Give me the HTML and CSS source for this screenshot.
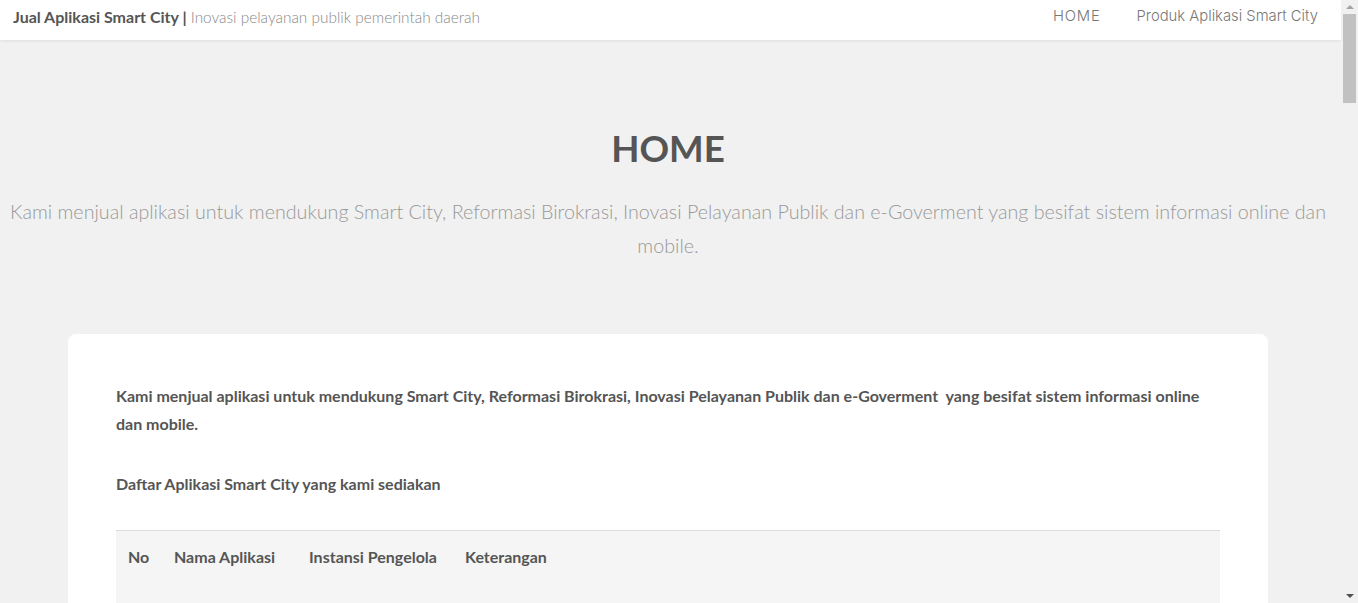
FILE: index.html
```html
<!DOCTYPE html>
<html lang="id">
<head>
<meta charset="utf-8">
<title>Jual Aplikasi Smart City</title>
<link rel="stylesheet" href="styles.css">
</head>
<body>
<div class="page">
  <header class="topbar">
    <div class="brand"><strong>Jual Aplikasi Smart City |</strong> <span>Inovasi pelayanan publik pemerintah daerah</span></div>
    <nav class="nav">
      <a href="#">HOME</a>
      <a href="#">Produk Aplikasi Smart City</a>
    </nav>
  </header>
  <section class="hero">
    <h1>HOME</h1>
    <p>Kami menjual aplikasi untuk mendukung Smart City, Reformasi Birokrasi, Inovasi Pelayanan Publik dan e-Goverment yang besifat sistem informasi online dan mobile.</p>
  </section>
  <main class="card">
    <p class="lead">Kami menjual aplikasi untuk mendukung Smart City, Reformasi Birokrasi, Inovasi Pelayanan Publik dan e-Goverment&nbsp; yang besifat sistem informasi online dan mobile.</p>
    <p class="lead">Daftar Aplikasi Smart City yang kami sediakan</p>
    <table class="apps">
      <thead>
        <tr><th class="c-no">No</th><th class="c-nama">Nama Aplikasi</th><th class="c-inst">Instansi Pengelola</th><th class="c-ket">Keterangan</th><th></th></tr>
      </thead>
      <tbody>
        <tr><td>1</td><td>e-Kinerja</td><td>BKD</td><td>Aplikasi penilaian kinerja pegawai</td><td></td></tr>
        <tr><td>2</td><td>e-Surat</td><td>Sekretariat Daerah</td><td>Aplikasi surat menyurat elektronik</td><td></td></tr>
      </tbody>
    </table>
  </main>
</div>
<div class="scrollbar" aria-hidden="true">
  <span class="arrow up"></span>
  <span class="thumb"></span>
  <span class="arrow down"></span>
</div>
</body>
</html>
```
FILE: styles.css
```css
html, body { margin: 0; padding: 0; }
body {
  background: #f1f1f1;
  font-family: Lato, "Open Sans", sans-serif;
  color: #555;
}
.page { width: 1341px; }
.topbar {
  height: 40px;
  background: #fff;
  box-shadow: 0 1px 3px rgba(0,0,0,0.08);
  display: flex;
  align-items: flex-start;
  justify-content: space-between;
  padding: 0 23px 0 13px;
}
.brand {
  font-size: 16px;
  line-height: 33px;
}
.brand strong { font-weight: 700; color: #555; }
.brand span { font-weight: 300; color: #888; font-size: 15.4px; }
.nav { display: flex; gap: 36px; }
.nav a {
  font-family: Inter, "Open Sans", sans-serif;
  font-weight: 300;
  font-size: 14.8px;
  line-height: 33px;
  color: #777;
  text-decoration: none;
}
.nav a:first-child { letter-spacing: 0.8px; }
.hero {
  text-align: center;
  padding: 84px 12px 0 7px;
  height: 210px;
}
.hero h1 {
  margin: 0;
  font-size: 36.7px;
  font-weight: 700;
  line-height: 48px;
  color: #555;
}
.hero p {
  margin: 23px 0 0;
  font-size: 19.7px;
  font-weight: 300;
  line-height: 34px;
  color: #999;
}
.card {
  width: 1104px;
  margin: 0 0 40px 68px;
  background: #fff;
  border-radius: 8px;
  padding: 48px 48px 40px;
}
.lead {
  margin: 0 0 32px;
  font-size: 16px;
  font-weight: 700;
  line-height: 28px;
  color: #555;
}
.apps {
  width: 100%;
  border-collapse: collapse;
  font-size: 16px;
  color: #555;
}
.apps thead tr {
  background: #f5f5f5;
  border-top: 1px solid #ddd;
}
.apps th {
  text-align: left;
  font-weight: 700;
  padding: 16px 12px 36px;
  line-height: 20px;
}
.apps th.c-no { width: 22px; }
.apps th.c-nama { width: 111px; }
.apps th.c-inst { width: 132px; }
.apps th.c-ket { width: 200px; }
.apps td { padding: 12px; border-top: 1px solid #eee; }

.scrollbar {
  position: fixed;
  top: 0;
  right: 0;
  width: 17px;
  height: 100vh;
  background: #f1f1f1;
  display: flex;
  flex-direction: column;
  align-items: center;
}
.arrow {
  width: 0;
  height: 0;
  border-left: 4px solid transparent;
  border-right: 4px solid transparent;
  margin: 5px 0;
}
.arrow.up { border-bottom: 4px solid #a3a3a3; }
.arrow.down { border-top: 4px solid #505050; margin-top: auto; }
.thumb {
  width: 13px;
  height: 89px;
  background: #c1c1c1;
  margin-top: 0;
}
```
